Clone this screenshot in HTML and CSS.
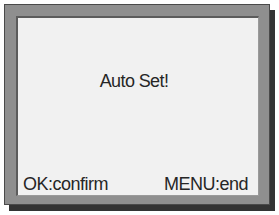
FILE: index.html
```html
<!DOCTYPE html>
<html>
<head>
<meta charset="utf-8">
<link rel="stylesheet" href="styles.css">
</head>
<body>
<div class="frame">
  <div class="screen">
    <div class="message">Auto Set!</div>
    <div class="footer">
      <span>OK:confirm</span>
      <span>MENU:end</span>
    </div>
  </div>
</div>
</body>
</html>
```
FILE: styles.css
```css
html, body {
  margin: 0;
  padding: 0;
  background: #ffffff;
}
body {
  width: 279px;
  height: 215px;
  padding: 4px 0 0 4px;
  box-sizing: border-box;
  font-family: "Liberation Sans", Arial, sans-serif;
}
.frame {
  width: 266px;
  height: 201px;
  box-sizing: border-box;
  background: #8f8f8f;
  border: 1px solid #4a4a4a;
  box-shadow: 5px 6px 0 #333333;
  padding: 11px 10px 8px 11px;
}
.screen {
  height: 100%;
  box-sizing: border-box;
  background: #f1f1f1;
  border-top: 2px solid #5c5c5c;
  border-left: 2px solid #5c5c5c;
  border-right: 1px solid #9a9a9a;
  border-bottom: 1px solid #9a9a9a;
  display: flex;
  flex-direction: column;
  color: #262626;
}
.message {
  flex: 1;
  display: flex;
  align-items: center;
  justify-content: center;
  font-size: 18px;
  letter-spacing: -0.6px;
  padding-bottom: 30px;
  padding-right: 8px;
}
.footer {
  display: flex;
  justify-content: space-between;
  font-size: 18px;
  letter-spacing: -0.5px;
  padding: 0 10px 1px 5px;
  line-height: 20px;
}
```
